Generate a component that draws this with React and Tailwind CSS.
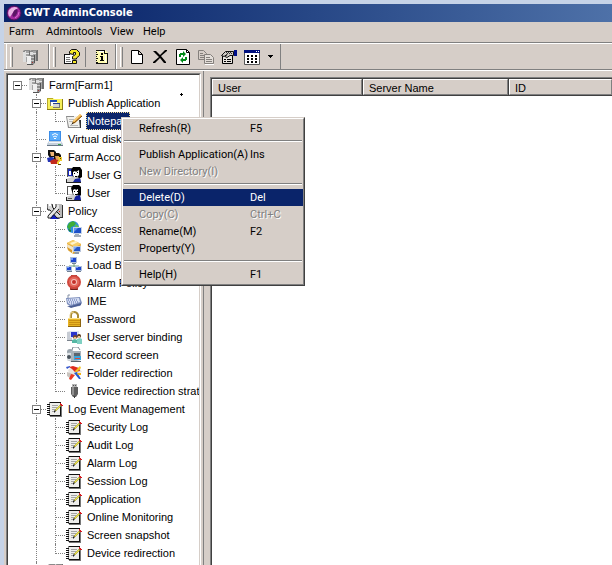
import { useState } from 'react'

const MENUS = [
  { label: 'Farm', cls: 'w-[37px]' },
  { label: 'Admintools', cls: 'w-[64px]' },
  { label: 'View', cls: 'w-[33px]' },
  { label: 'Help', cls: 'w-[30px]' },
]

const TREE = [
  {
    label: 'Farm[Farm1]', icon: 'farm', children: [
      { label: 'Publish Application', icon: 'publish', children: [
        { label: 'Notepad', icon: 'notepad' },
      ] },
      { label: 'Virtual disk', icon: 'disk' },
      { label: 'Farm Account', icon: 'account', children: [
        { label: 'User Group', icon: 'group' },
        { label: 'User', icon: 'user' },
      ] },
      { label: 'Policy', icon: 'policy', children: [
        { label: 'Access Policy', icon: 'access' },
        { label: 'System Policy', icon: 'system' },
        { label: 'Load Balance', icon: 'load' },
        { label: 'Alarm Policy', icon: 'alarm' },
        { label: 'IME', icon: 'ime' },
        { label: 'Password', icon: 'password' },
        { label: 'User server binding', icon: 'binding' },
        { label: 'Record screen', icon: 'record' },
        { label: 'Folder redirection', icon: 'folder' },
        { label: 'Device redirection strategy', icon: 'device' },
      ] },
      { label: 'Log Event Management', icon: 'log', children: [
        { label: 'Security Log', icon: 'log' },
        { label: 'Audit Log', icon: 'log' },
        { label: 'Alarm Log', icon: 'log' },
        { label: 'Session Log', icon: 'log' },
        { label: 'Application', icon: 'log' },
        { label: 'Online Monitoring', icon: 'log' },
        { label: 'Screen snapshot', icon: 'log' },
        { label: 'Device redirection', icon: 'log' },
      ] },
      { label: '', icon: 'farm' },
    ],
  },
]

const CONTEXT_MENU = [
  [{ label: 'Refresh(R)', hint: 'F5' }],
  [
    { label: 'Publish Application(A)', hint: 'Ins' },
    { label: 'New Directory(I)', disabled: true },
  ],
  [
    { label: 'Delete(D)', hint: 'Del', active: true },
    { label: 'Copy(C)', hint: 'Ctrl+C', disabled: true },
    { label: 'Rename(M)', hint: 'F2' },
    { label: 'Property(Y)' },
  ],
  [{ label: 'Help(H)', hint: 'F1' }],
]

const ICONS = {
  farm: (
    <>
      <path d="M1 2l2-1h5v12H1zM8 2l2-1h5v11H8z" fill="#a5a5a5" />
      <path d="M1 2h3v11H1zM8 2h3v8H8z" fill="#dedede" />
      <path d="M7 1h1v11H7zM14 1h2v11h-2z" fill="#707070" />
      <path d="M1 2l2-1h5v1H3v1H1zM8 2l2-1h5v1h-4v1H8z" fill="#8a8a8a" />
      <path d="M4 4h3v1H4zM11 4h3v1h-3zM4 7h2v1H4z" fill="#e6e6e6" />
      <path d="M5 7l2-1h6v8l-2 2H5z" fill="#8c8c8c" />
      <path d="M5 7h4v9H5z" fill="#efefef" />
      <path d="M9 8h3v1H9zM9 11h3v1H9z" fill="#c9c9c9" />
      <path d="M12 6h1v8h-1zM5 15h6v1H5z" fill="#555" />
      <path d="M10 13h1v1h-1z" fill="#a33" />
    </>
  ),
  publish: (
    <>
      <path d="M0 3h6l1 1h9v11H0z" fill="#f5ef5a" />
      <path d="M0 3h6v1H0zM0 3h1v12H0z" fill="#b9a92a" />
      <path d="M15 4h1v11h-1zM0 14h16v1H0z" fill="#8b7d18" />
      <path d="M3 5h7v6H3z" fill="#fff" />
      <path d="M3 5h7v2H3z" fill="#1d49b5" />
      <path d="M6 8h7v5H6z" fill="#d8d8d0" />
      <path d="M6 8h7v1H6z" fill="#28418c" />
      <path d="M3 7h1v4H3zM12 9h1v4h-1zM6 12h7v1H6z" fill="#777" />
    </>
  ),
  notepad: (
    <>
      <path d="M0 3h11l3 3 1 9H2z" fill="#f1f1ee" />
      <path d="M0 3h8v1H1l2 10h12v1H2z" fill="#8c8c8c" />
      <path d="M13 7h2v8h-1z" fill="#333" />
      <path d="M3 6h5v1H3zM3 8h4v1H3zM4 12h8v1H4z" fill="#b8b8b8" />
      <path d="M6 11l1-3 7-7 2 2-7 7z" fill="#efa22d" />
      <path d="M8 10l8-7" stroke="#7a4d16" fill="none" />
      <path d="M7 8l7-7 1 1-7 7z" fill="#f8cf7c" />
      <path d="M5 12l2-3 1 1z" fill="#111" />
    </>
  ),
  disk: (
    <>
      <path d="M2 0h12v10H2z" fill="#3b8de8" />
      <path d="M3 1h10v8H3z" fill="#5daefb" />
      <path d="M5 4q3-3 6 0M6 6q2-2 4 0" stroke="#fff" fill="none" />
      <path d="M7 7h2v1H7z" fill="#fff" />
      <path d="M2 10h12l2 3v2H0v-2z" fill="#c5d0dc" />
      <path d="M2 11h12v1H2z" fill="#f3f7fb" />
      <path d="M0 14h16v1H0z" fill="#6a7988" />
      <path d="M11 13h3v1h-3z" fill="#3aa64c" />
    </>
  ),
  account: (
    <>
      <path d="M1 1h6l2 2v5H7l-4 1-2-3z" fill="#111" />
      <path d="M3 3h4v4H4z" fill="#f1b777" />
      <path d="M0 9l4-1 4 1 1 4H1z" fill="#2434b4" />
      <path d="M7 4h5l2 2v5l-5 1-2-2z" fill="#1a1208" />
      <path d="M8 7h4v4H9z" fill="#e6a45c" />
      <path d="M3 12l4-2 4 1 1 4H4z" fill="#c22a1c" />
      <path d="M11 8h4v4h-2v1h-1v2h-2v-2l2-2z" fill="#f3cf2f" />
      <path d="M13 9h1v1h-1z" fill="#5b4200" />
      <path d="M11 15h3v1h-3z" fill="#604b00" />
    </>
  ),
  user: (
    <>
      <path d="M1 1h8v9H1z" fill="#c9c9c9" />
      <path d="M2 2h5v7H2z" fill="#fff" />
      <path d="M1 1h7v1H1zM1 1h1v9H1z" fill="#555" />
      <path d="M5 3l2-3h6l2 2v8l-2 2-1-2-3 2-2-2z" fill="#000" />
      <path d="M7 5l2-1 1 1 2-1v4l-2 3H8L7 8z" fill="#fff" />
      <path d="M8 6h1v1H8zM11 6h1v1h-1zM9 9h2v1H9z" fill="#000" />
      <path d="M0 12l6-2h3l6 2v3H0z" fill="#cfcfcf" />
      <path d="M9 12l1-1 4-1 1 5H8z" fill="#111f9e" />
      <path d="M0 15h15v1H0zM0 12h1v3H0z" fill="#222" />
      <path d="M2 13h4v1H2z" fill="#555" />
    </>
  ),
  group: (
    <>
      <path d="M1 1h8v9H1z" fill="#c9c9c9" />
      <path d="M2 2h5v7H2z" fill="#1a2bc0" />
      <path d="M1 1h7v1H1zM1 1h1v9H1z" fill="#555" />
      <path d="M5 3l2-3h7l2 3v7l-3 2-1-2-3 2-2-2z" fill="#000" />
      <path d="M7 5l2-1 1 1 3-2v5l-3 3H8L7 8z" fill="#fff" />
      <path d="M3 4h2v4H3z" fill="#fff" />
      <path d="M8 6h1v1H8zM11 5h1v1h-1zM9 9h2v1H9z" fill="#000" />
      <path d="M0 12l6-2h3l6 2v3H0z" fill="#cfcfcf" />
      <path d="M9 12l5-1 1 4H7z" fill="#16269f" />
      <path d="M0 15h15v1H0zM0 12h1v3H0z" fill="#222" />
    </>
  ),
  policy: (
    <>
      <path d="M10 1h5v13h-4z" fill="#b9b9b9" />
      <path d="M15 2h1v13h-4v-1h3z" fill="#333" />
      <path d="M12 8h1v1h-1z" fill="#d22" />
      <path d="M5 12h5l2 4H3z" fill="#1420c8" />
      <path d="M0 1h2v2h2V0l2 2v3l7 7v3h-3L3 7H1L0 5z" fill="#d8d8d8" />
      <path d="M0 1v4l1 2h2l7 8h3M5 1l1 4 7 7" stroke="#111" fill="none" />
      <path d="M9 1l3 1v3l-8 9-3 1v-3l8-8z" fill="#e6e6e6" />
      <path d="M9 1v3l-8 9v2h3l8-9" stroke="#222" fill="none" />
    </>
  ),
  access: (
    <>
      <circle cx="7" cy="6" r="6" fill="#2d8fdc" />
      <path d="M3 2l4-2 3 2-2 3-3 1-1 3-3-3z" fill="#3cae39" />
      <path d="M10 3l3 3-2 2-2-2z" fill="#62c840" />
      <path d="M2 8l3 1v2L3 10z" fill="#1f7b36" />
      <path d="M7 6h9v7H7z" fill="#c6d4e8" />
      <path d="M8 7h7v5H8z" fill="#1c50c9" />
      <path d="M8 7h4l-4 4z" fill="#5d94f0" />
      <path d="M9 13h4v1h2v2H8v-2h1z" fill="#a2adba" />
    </>
  ),
  system: (
    <>
      <path d="M1 4l6-3 8 4-1 8-7 2-5-4z" fill="#e6a832" />
      <path d="M1 4l6-3 8 4-6 3z" fill="#f5cf6c" />
      <path d="M4 4l6-2 2 1-6 3z" fill="#fff3cc" />
      <path d="M1 5l6 3v7l-5-4z" fill="#efe4c8" />
      <path d="M1 8l5 3v3l-4-3z" fill="#d99a28" />
      <path d="M7 7h8v6H7z" fill="#bac7dd" />
      <path d="M8 8h6v4H8z" fill="#2555c7" />
      <path d="M8 8h3l-3 3z" fill="#80adf5" />
      <path d="M9 13h4v2H8z" fill="#8f9aa9" />
    </>
  ),
  load: (
    <>
      <path d="M8 6v4M3 10V9h10v1" stroke="#71a07a" fill="none" />
      <path d="M4 0h7v6H4zM0 9h6v5H0zM9 9h7v5H9z" fill="#aebfd9" />
      <path d="M5 1h5v4H5zM1 10h4v3H1zM10 10h5v3h-5z" fill="#1d46cf" />
      <path d="M5 1h2v2H5zM1 10h2v1H1zM10 10h2v1h-2z" fill="#6e9aff" />
      <path d="M6 6h4v1H6zM1 14h5v1H1zM10 14h5v1h-5z" fill="#718096" />
    </>
  ),
  alarm: (
    <>
      <path d="M5 0h6v3H5zM4 12h8v3H4z" fill="#a83a31" />
      <circle cx="8" cy="7" r="7" fill="#d0483e" />
      <circle cx="8" cy="7" r="5" fill="#e5695d" />
      <circle cx="8" cy="7" r="3" fill="#f4c3bb" />
      <circle cx="8" cy="7" r="2" fill="#c5312a" />
      <path d="M5 14h6v1H5z" fill="#6f211c" />
    </>
  ),
  ime: (
    <>
      <path d="M2 5V2h2" stroke="#8490a5" fill="none" />
      <path d="M0 5l14-1 2 6-2 3-9 1-4-3z" fill="#7f90bd" />
      <path d="M1 6l12-1 1 4-9 3-3-2z" fill="#d6def3" />
      <path d="M2 7h10M3 9h10M5 11h4" stroke="#5267a8" strokeDasharray="1 1" fill="none" />
      <path d="M5 13l10-3v2L5 15l-4-2z" fill="#4d5f94" />
    </>
  ),
  password: (
    <>
      <path d="M5 8V4q0-3 3-3t4 3v4" stroke="#a98b35" strokeWidth="2" fill="none" />
      <path d="M4 7V4q0-3 4-3" stroke="#e8d18b" fill="none" />
      <path d="M2 7h13v8H2z" fill="#e8b424" />
      <path d="M2 7h13v1H2z" fill="#fbe28a" />
      <path d="M3 9h11v1H3zM3 11h11v1H3zM3 13h11v1H3z" fill="#c98f12" />
      <path d="M2 15h13v1H2zM14 8h1v7h-1z" fill="#8c6410" />
    </>
  ),
  binding: (
    <>
      <path d="M1 3l5-1v9l-5 1z" fill="#c7ccd4" />
      <path d="M4 2h9v7H4z" fill="#dbe3f2" />
      <path d="M5 3h6v5H5z" fill="#2a35cc" />
      <path d="M1 11h6v1H1z" fill="#7a828c" />
      <circle cx="9" cy="8" r="2" fill="#7a4a24" />
      <circle cx="13" cy="7" r="2" fill="#5c3a1b" />
      <path d="M8 8h2v2H8zM12 7h2v2h-2z" fill="#f0c296" />
      <path d="M6 11l3-1 2 1v3H6z" fill="#55b8a4" />
      <path d="M11 10l3-1 2 1v5h-5z" fill="#7fd0c2" />
    </>
  ),
  record: (
    <>
      <path d="M6 3l1-3h5l2 3" stroke="#7d8790" fill="none" />
      <circle cx="4" cy="5" r="3" fill="#98a2ab" />
      <path d="M1 6l4-2h10v9l-9 2-5-2z" fill="#aab3ba" />
      <path d="M1 6h4v8l-4-1z" fill="#dde2e6" />
      <circle cx="3" cy="10" r="2" fill="#48525b" />
      <path d="M8 6h6v3H8z" fill="#5c6770" />
      <path d="M8 9h7v4H8z" fill="#38a7df" />
      <path d="M9 11h5v1H9z" fill="#e24a36" />
      <path d="M5 14h10v1H5z" fill="#5a636b" />
    </>
  ),
  folder: (
    <>
      <path d="M2 5l4-3 8 2 2 3-8 3-5-1z" fill="#e9e5e1" />
      <path d="M1 7l6 2-2 5-4-3z" fill="#c9c3be" />
      <path d="M3 2l4-1 6 2 1 3-5 1-3-3z" fill="#de2c1e" />
      <path d="M0 2l4-1v1L1 4z" fill="#3357cf" />
      <path d="M9 6l5-5 1 2-5 5z" fill="#f2c321" />
      <path d="M5 9l4 1-4 5-2-1z" fill="#e93b24" />
      <path d="M8 8l3-1 4 7h-2z" fill="#2459cf" />
      <path d="M11 8h4v2h-3z" fill="#f4b61b" />
    </>
  ),
  device: (
    <>
      <path d="M6 1h5v3H6z" fill="#b5b5b5" />
      <path d="M7 2h1v1H7zM9 2h1v1H9z" fill="#555" />
      <path d="M5 4h7v7l-2 3H7l-2-3z" fill="#5f5f5f" />
      <path d="M6 4h2v8H6z" fill="#919191" />
      <path d="M8 13h1v2H8z" fill="#3a3a3a" />
    </>
  ),
  log: (
    <>
      <path d="M3 1h11v14H3z" fill="#eeeeec" />
      <path d="M2 1h12v1H2zM13 1h1v14h-1zM2 14h12v1H2z" fill="#111" />
      <path d="M3 15h12v1H3zM14 3h1v13h-1z" fill="#777" />
      <path d="M2 1h1v14H2z" fill="#888" />
      <path d="M0 3h3v1H0zM0 5h3v1H0zM0 7h3v1H0zM0 9h3v1H0zM0 11h3v1H0zM0 13h3v1H0z" fill="#111" />
      <path d="M5 4h6v1H5zM5 6h5v1H5zM5 8h4v1H5zM5 10h2v1H5z" fill="#a5a5a5" />
      <path d="M7 12v-2l6-6 1 1-6 6z" fill="#222" />
      <path d="M8 9l5-5 1 1-5 5z" fill="#f1e63f" />
      <path d="M13 2h1v1h1v1h1v1h-2v-1h-1z" fill="#d71920" />
    </>
  ),
  book: (
    <>
      <path d="M1 6h9v8H1z" fill="#fff" />
      <path d="M0 5h6v1H1v8h8v-2h1v3H0z" fill="#111" />
      <path d="M2 8h4v1H2zM2 10h4v1H2zM2 12h5v1H2z" fill="#777" />
      <path d="M5.500 4.500V2.500l2-2h5l3 3v3l-3 2.500v1h-4V7.500l3-2V3.500h-2v2z" fill="#f6e729" stroke="#111" />
      <path d="M8.500 11.500h4v3h-4z" fill="#f6e729" stroke="#111" />
    </>
  ),
  info: (
    <>
      <path d="M2 1h9l3 3v11H2z" fill="#fffcb0" />
      <path d="M5 2h5v1H5zM11 6h1v7h-1z" fill="#fff" />
      <path d="M2 1h2v1H2zM2 3h1v1H2zM2 5h2v1H2zM2 7h1v1H2zM2 9h2v1H2zM2 11h1v1H2zM2 13h2v1H2z" fill="#111" />
      <path d="M4 1h7v1H4zM2 14h12v1H2zM13 4h1v11h-1zM10 1h1v3h3v1h-4z" fill="#111" />
      <path d="M7 4h2v2H7zM6 7h3v4h1v1H6v-1h1V8H6z" fill="#000" />
    </>
  ),
  page: <path d="M2.500 1.500h7l4 4v9h-11zM9.500 1.500v4h4" fill="#fff" stroke="#000" />,
  cross: <path d="M1 2h3l4 4 5-5h2v1L9 7l5 6v1h-2L8 9l-5 5H1v-1l6-5-5-5z" fill="#000" />,
  refresh: (
    <>
      <path d="M1.500 .500h10l3 3v12h-13z" fill="#fff" stroke="#000" />
      <path d="M11.500 .500v3h3" fill="none" stroke="#000" />
      <path d="M4 8V5h1V4h3V2l3 3-3 3V6H6v2zM12 8v3h-1v1H8v2l-3-3 3-3v2h2V8z" fill="#008a18" />
    </>
  ),
  copy: (
    <>
      <path d="M.500 1.500h5l3 3v6h-8z" fill="#d6cec8" stroke="#84807c" />
      <path d="M2 4h3v1H2zM2 6h4v1H2zM2 8h4v1H2z" fill="#84807c" />
      <path d="M6.500 5.500h6l3 3v6h-9z" fill="#e3ded9" stroke="#84807c" />
      <path d="M8 8h4v1H8zM8 10h6v1H8zM8 12h6v1H8z" fill="#84807c" />
      <path d="M7 15h9v1H7z" fill="#fff" />
    </>
  ),
  props: (
    <>
      <path d="M1.500 5.500h10v9h-10z" fill="#e8e4df" stroke="#000" />
      <path d="M3 10h2v1H3zM6 10h4v1H6zM3 12h2v1H3zM6 12h4v1H6z" fill="#000" />
      <path d="M.500 6.500l4-4h8v4H9l-3 2-2-1 2-2-3 2z" fill="#cfcac4" stroke="#111" />
      <path d="M5 3h1v1H5zM7 3h1v1H7zM9 3h1v1H9zM6 4h1v1H6zM8 4h1v1H8zM10 4h1v1h-1z" fill="#333" />
      <path d="M13 1h3v6h-3z" fill="#00108c" />
    </>
  ),
  grid: (
    <>
      <path d="M.500 1.500h15v14H.500z" fill="#fff" stroke="#555" />
      <path d="M0 1h16v3H0z" fill="#00107e" />
      <path d="M12 2h1v1h-1zM14 2h1v1h-1z" fill="#fff" />
      <path d="M3 6h2v2H3zM7 6h2v2H7zM11 6h2v2h-2zM3 9h2v2H3zM7 9h2v2H7zM11 9h2v2h-2zM3 12h2v2H3zM7 12h2v2H7zM11 12h2v2h-2z" fill="#000" />
    </>
  ),
}

function Icon({ name }) {
  return (
    <svg viewBox="0 0 16 16" className="w-4 h-4 shrink-0" aria-hidden="true">
      {ICONS[name]}
    </svg>
  )
}

function Guide({ line, stub }) {
  return (
    <span className="relative w-[19px] h-full shrink-0">
      {line === 'full' && <span className="absolute left-[9px] inset-y-0 border-l border-dotted border-[#808080]" />}
      {line === 'half' && <span className="absolute left-[9px] top-0 h-[10px] border-l border-dotted border-[#808080]" />}
      {stub && <span className="absolute left-[9px] right-0 top-[9px] border-t border-dotted border-[#808080]" />}
    </span>
  )
}

function TreeNode({ node, depth, lines, last, selected, onSelect }) {
  const [open, setOpen] = useState(true)
  const own = depth === 0 ? 'none' : last ? 'half' : 'full'
  const isSelected = selected === node.label

  return (
    <li>
      <div className="flex items-center h-[18px] whitespace-nowrap">
        {lines.map((l, i) => <Guide key={i} line={l} />)}
        <span className="relative flex h-full shrink-0">
          <Guide line={own} stub />
          {node.children && (
            <button
              onClick={() => setOpen(!open)}
              aria-label={open ? 'Collapse' : 'Expand'}
              className="absolute left-[5px] top-[5px] w-[9px] h-[9px] border border-[#808080] bg-white flex items-center justify-center"
            >
              <span className="w-[5px] h-px bg-black" />
            </button>
          )}
        </span>
        <span className="w-[21px] shrink-0 flex pl-px"><Icon name={node.icon} /></span>
        {node.label && (
          <button
            onClick={() => onSelect(node.label)}
            className={isSelected
              ? 'h-[18px] px-px bg-[#0a246a] text-white outline-1 -outline-offset-1 outline-dotted outline-[#f5db95]'
              : 'h-[18px] px-px'}
          >
            {node.label}
          </button>
        )}
      </div>
      {node.children && open && (
        <ul>
          {node.children.map((child, i) => (
            <TreeNode
              key={i}
              node={child}
              depth={depth + 1}
              lines={[...lines, depth === 0 ? 'none' : own]}
              last={i === node.children.length - 1}
              selected={selected}
              onSelect={onSelect}
            />
          ))}
        </ul>
      )}
    </li>
  )
}

function ToolButton({ icon, label, disabled }) {
  return (
    <button aria-label={label} disabled={disabled} className="w-[23px] h-[22px] flex items-center justify-center">
      <Icon name={icon} />
    </button>
  )
}

function Band({ children }) {
  return (
    <div className="flex items-center h-full pl-[3px] border-l border-l-white border-r border-r-[#808080]">
      <span className="w-[3px] h-5 border-l border-l-white border-r border-r-[#808080] bg-[#d6cec8]" />
      {children}
    </div>
  )
}

function ContextMenu() {
  return (
    <div role="menu" className="absolute left-[121px] top-[117px] w-[184px] bg-[#d6cec8] border border-t-[#d6cec8] border-l-[#d6cec8] border-r-[#404040] border-b-[#404040] font-[Roboto,'Liberation_Sans',sans-serif] text-[11px]">
      <div className="border border-t-white border-l-white border-r-[#808080] border-b-[#808080] py-px">
        {CONTEXT_MENU.map((group, g) => (
          <div key={g} className={g > 0 ? 'relative pt-[9px]' : ''}>
            {g > 0 && <div className="absolute top-[3px] inset-x-px h-[2px] bg-white border-t border-[#808080]" />}
            {group.map(item => (
              <button
                key={item.label}
                role="menuitem"
                disabled={item.disabled}
                className={[
                  'flex w-full h-[17px] pl-4 leading-[17px] text-left whitespace-nowrap',
                  item.active ? 'bg-[#0a246a] text-white' : '',
                  item.disabled ? 'text-[#808080] [text-shadow:1px_1px_0_#fff]' : '',
                ].join(' ')}
              >
                <span className="w-[111px]">{item.label}</span>
                <span>{item.hint}</span>
              </button>
            ))}
          </div>
        ))}
      </div>
    </div>
  )
}

export default function App() {
  const [selected, setSelected] = useState('Notepad')

  return (
    <div className="relative h-screen overflow-hidden pl-1 pt-1 bg-[#c6d3e7] text-black">
      <div className="flex flex-col h-full bg-[#d6cec8]">
        {/* Title bar */}
        <header className="flex items-center h-[18px] shrink-0 pl-[2px] gap-[2px] bg-linear-to-r from-[#0a246a] from-10% to-[#4e71a8]">
          <svg viewBox="0 0 16 16" className="w-4 h-4" aria-hidden="true">
            <circle cx="8" cy="8" r="7" fill="#a329a0" stroke="#4b1058" />
            <path d="M3 5q4-5 9-2l-4 3-4 6q-3-3-1-7z" fill="#e9b3e4" />
            <ellipse cx="9" cy="8" rx="2" ry="4" fill="#5a1566" transform="rotate(25 9 8)" />
            <path d="M9 13q4-2 4-6" stroke="#dd72d3" fill="none" />
          </svg>
          <h1 className="font-['DejaVu_Sans_Condensed','DejaVu_Sans',sans-serif] font-bold text-[11px] leading-[18px] text-white">
            GWT AdminConsole
          </h1>
        </header>

        {/* Menu bar */}
        <nav className="flex h-5 shrink-0 pl-[5px] font-[Roboto,'Liberation_Sans',sans-serif] text-[11px]">
          {MENUS.map(m => (
            <button key={m.label} className={`${m.cls} text-left`}>{m.label}</button>
          ))}
        </nav>

        {/* Toolbar */}
        <div className="flex h-[29px] shrink-0 border-t border-b border-t-[#808080] border-b-white">
          <div className="flex w-full pl-[2px] border-t border-b border-t-white border-b-[#808080]">
            <Band>
              <span className="pl-[5px] pr-[7px]"><ToolButton icon="farm" label="Farm" /></span>
            </Band>
            <Band>
              <span className="pl-1"><ToolButton icon="book" label="Help" /></span>
              <span className="w-px h-5 ml-[2px] mr-1 bg-[#808080]" />
              <span className="pr-[2px]"><ToolButton icon="info" label="About" /></span>
            </Band>
            <Band>
              <span className="flex pl-[2px]">
                <ToolButton icon="page" label="New" />
                <ToolButton icon="cross" label="Delete" />
                <ToolButton icon="refresh" label="Refresh" />
                <ToolButton icon="copy" label="Copy" disabled />
                <ToolButton icon="props" label="Properties" />
                <ToolButton icon="grid" label="View" />
              </span>
              <button aria-label="View options" className="w-[15px] h-[22px] mr-[2px] flex items-center justify-center">
                <svg viewBox="0 0 5 3" className="w-[5px] h-[3px]" aria-hidden="true">
                  <path d="M0 0h5v1H4v1H3v1H2V2H1V1H0z" />
                </svg>
              </button>
            </Band>
          </div>
        </div>

        <div className="flex flex-1 min-h-0 pl-[2px]">
          {/* Farm tree */}
          <div className="w-[195px] shrink-0 mt-[2px] border border-b-0 border-l-[#808080] border-t-[#808080] border-r-white">
            <div className="h-full overflow-hidden pt-px border border-b-0 border-l-[#404040] border-t-[#404040] border-r-[#d6cec8] bg-white font-['Liberation_Sans',Arial,sans-serif] text-[11px] leading-[18px]">
              <ul>
                {TREE.map(node => (
                  <TreeNode
                    key={node.label}
                    node={node}
                    depth={0}
                    lines={[]}
                    last
                    selected={selected}
                    onSelect={setSelected}
                  />
                ))}
              </ul>
            </div>
          </div>

          <div className="w-2 shrink-0 ml-[2px] border-l border-[#808080]" />

          {/* Session list */}
          <div className="flex-1 min-w-0 mt-[6px] -ml-px border-l border-t border-[#808080]">
            <div className="h-full border-l border-t border-[#404040] bg-white">
              <table className="w-full table-fixed border-separate border-spacing-0 font-['Liberation_Sans',Arial,sans-serif] text-[11px]">
                <thead>
                  <tr className="bg-[#d6cec8] text-left">
                    {[['User', 'w-[151px] border-r'], ['Server Name', 'w-[146px] border-r'], ['ID', '']].map(([label, w]) => (
                      <th key={label} scope="col" className={`${w} p-0 font-normal border-b border-[#404040]`}>
                        <div className="h-4 pl-[5px] leading-4 border border-t-white border-l-white border-r-[#808080] border-b-[#808080]">
                          {label}
                        </div>
                      </th>
                    ))}
                  </tr>
                </thead>
              </table>
            </div>
          </div>
        </div>
      </div>

      <svg viewBox="0 0 3 3" className="absolute left-[180px] top-[93px] w-[3px] h-[3px]" aria-hidden="true">
        <path d="M1 0h1v1h1v1H2v1H1V2H0V1h1z" />
      </svg>
      <ContextMenu />
    </div>
  )
}
